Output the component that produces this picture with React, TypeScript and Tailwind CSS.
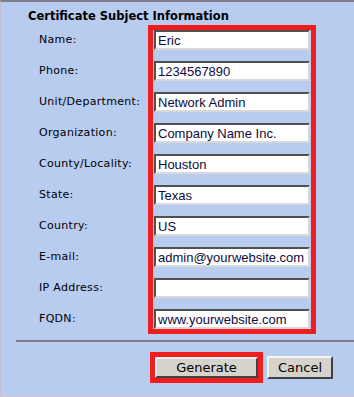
const fields = [
  { label: 'Name:', value: 'Eric' },
  { label: 'Phone:', value: '1234567890' },
  { label: 'Unit/Department:', value: 'Network Admin' },
  { label: 'Organization:', value: 'Company Name Inc.' },
  { label: 'County/Locality:', value: 'Houston' },
  { label: 'State:', value: 'Texas' },
  { label: 'Country:', value: 'US' },
  { label: 'E-mail:', value: 'admin@yourwebsite.com' },
  { label: 'IP Address:', value: '' },
  { label: 'FQDN:', value: 'www.yourwebsite.com' },
];

export default function App() {
  return (
    <div className="h-[397px] w-[354px] overflow-hidden border-t-2 border-l border-b border-t-[#7c7c8c] border-l-[#c8bccc] border-b-[#d4c4d4] bg-[#b8ccf0] font-['DejaVu_Sans',sans-serif] text-black">
      {/* Title */}
      <h2 className="pl-[27px] pt-[8px] text-[11.5px] font-bold leading-[13px]">
        Certificate Subject Information
      </h2>

      {/* Form */}
      <div className="mt-[2px] flex">
        <div className="mt-[5px] flex w-[147px] flex-col gap-[11px] pl-[38px]">
          {fields.map((f) => (
            <div key={f.label} className="flex h-[20px] items-center text-[11px] tracking-[0.3px]">
              {f.label}
            </div>
          ))}
        </div>
        <div className="w-[168px] border-[5px] border-[#f01e1e] px-px">
          <div className="flex flex-col gap-[11px]">
            {fields.map((f) => (
              <input
                key={f.label}
                readOnly
                value={f.value}
                className="h-[20px] w-[156px] border-2 border-t-[#505050] border-l-[#505050] border-r-[#d8d8d8] border-b-[#d8d8d8] bg-white px-[2px] font-['Liberation_Sans',sans-serif] text-[13px] text-[#0c0c40] outline-none"
              />
            ))}
          </div>
        </div>
      </div>

      {/* Separator */}
      <div className="mt-[6px] ml-[15px] h-[2px] bg-[#7a7a88]" />

      {/* Buttons */}
      <div className="mt-[10px] flex items-center pl-[149px]">
        <div className="border-[5px] border-[#f01e1e]">
          <button className="block h-[21px] w-[103px] border-2 border-t-[#f4f4f4] border-l-[#f4f4f4] border-r-[#404040] border-b-[#404040] bg-[#d6d2cc] text-[13px] leading-none">
            Generate
          </button>
        </div>
        <button className="ml-[4px] h-[23px] w-[66px] border-2 border-t-[#f4f4f4] border-l-[#f4f4f4] border-r-[#404040] border-b-[#404040] bg-[#d6d2cc] text-[13px] leading-none">
          Cancel
        </button>
      </div>
    </div>
  );
}
